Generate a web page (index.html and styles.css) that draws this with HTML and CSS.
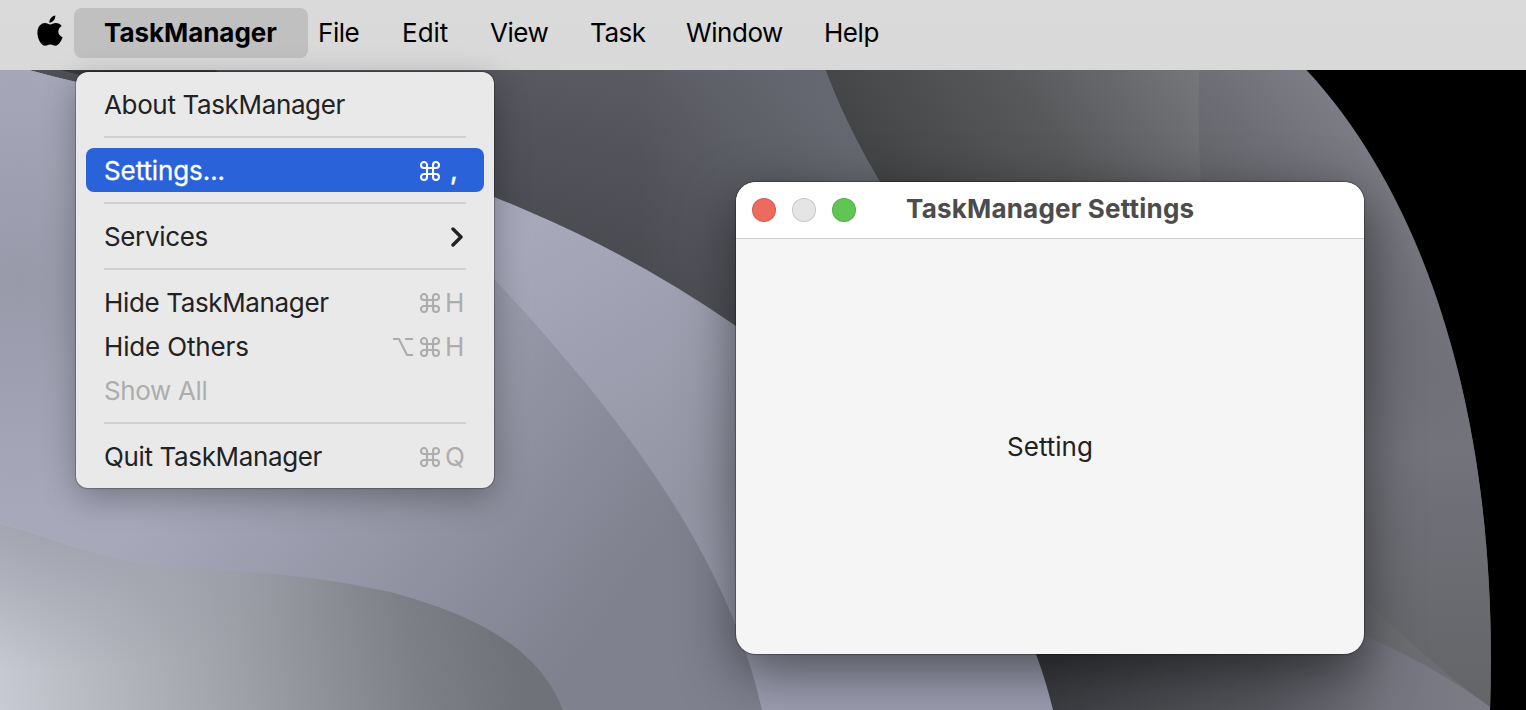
FILE: index.html
```
<!DOCTYPE html>
<html lang="en">
<head>
<meta charset="utf-8">
<title>TaskManager</title>
<link rel="stylesheet" href="styles.css">
</head>
<body>
<svg class="wallpaper" viewBox="0 0 1526 710" preserveAspectRatio="none" aria-hidden="true">
  <defs>
    <linearGradient id="mid" gradientUnits="userSpaceOnUse" x1="700" y1="70" x2="640" y2="330">
      <stop offset="0" stop-color="#5b5c64"/><stop offset="1" stop-color="#45464b"/>
    </linearGradient>
    <linearGradient id="midglow" gradientUnits="userSpaceOnUse" x1="640" y1="0" x2="880" y2="0">
      <stop offset="0" stop-color="#777a85" stop-opacity="0"/><stop offset="1" stop-color="#777a85" stop-opacity=".5"/>
    </linearGradient>
    <linearGradient id="fan" gradientUnits="userSpaceOnUse" x1="900" y1="210" x2="1170" y2="20">
      <stop offset="0" stop-color="#434446"/><stop offset=".5" stop-color="#57585a"/><stop offset="1" stop-color="#77787c"/>
    </linearGradient>
    <linearGradient id="edge" gradientUnits="userSpaceOnUse" x1="1180" y1="260" x2="1350" y2="110">
      <stop offset="0" stop-color="#58595c"/><stop offset="1" stop-color="#7c7d86"/>
    </linearGradient>
    <linearGradient id="side" gradientUnits="userSpaceOnUse" x1="0" y1="200" x2="0" y2="700">
      <stop offset="0" stop-color="#73747d" stop-opacity="0"/><stop offset=".5" stop-color="#72737b"/><stop offset="1" stop-color="#646568"/>
    </linearGradient>
    <linearGradient id="bottom" gradientUnits="userSpaceOnUse" x1="1040" y1="690" x2="1480" y2="690">
      <stop offset="0" stop-color="#3b3c40"/><stop offset=".5" stop-color="#55565c"/><stop offset=".8" stop-color="#74757e"/><stop offset="1" stop-color="#7b7c86"/>
    </linearGradient>
    <linearGradient id="lav" gradientUnits="userSpaceOnUse" x1="530" y1="230" x2="790" y2="640">
      <stop offset="0" stop-color="#a7a9bb"/><stop offset=".65" stop-color="#9395a4"/><stop offset="1" stop-color="#9c9eb0"/>
    </linearGradient>
    <linearGradient id="fold" gradientUnits="userSpaceOnUse" x1="220" y1="400" x2="580" y2="650">
      <stop offset="0" stop-color="#a7a9bb"/><stop offset=".45" stop-color="#9698a8"/><stop offset="1" stop-color="#7f818f"/>
    </linearGradient>
    <radialGradient id="foldShade" gradientUnits="userSpaceOnUse" cx="20" cy="280" r="230">
      <stop offset="0" stop-color="#989aaa"/><stop offset="1" stop-color="#989aaa" stop-opacity="0"/>
    </radialGradient>
    <linearGradient id="wave" gradientUnits="userSpaceOnUse" x1="0" y1="710" x2="510" y2="620">
      <stop offset="0" stop-color="#c8cad3"/><stop offset=".45" stop-color="#a0a2aa"/><stop offset=".8" stop-color="#7e8088"/><stop offset="1" stop-color="#707279"/>
    </linearGradient>
    <radialGradient id="waveTop" gradientUnits="userSpaceOnUse" cx="0" cy="0" r="1" gradientTransform="translate(50 520) scale(330 150)">
      <stop offset="0" stop-color="#9c9eab" stop-opacity=".9"/><stop offset="1" stop-color="#9c9eab" stop-opacity="0"/>
    </radialGradient>
    <clipPath id="globe"><path d="M0 60H1297C1425 190 1500 420 1490 710H0Z"/></clipPath>
  </defs>
  <rect width="1526" height="710" fill="#000"/>
  <path d="M0 60H1297C1425 190 1500 420 1490 710H0Z" fill="url(#edge)"/>
  <path d="M1200 190H1526V710H1200Z" fill="url(#side)" clip-path="url(#globe)"/>
  <path d="M800 60H1200Q1196 130 1204 230H800Z" fill="url(#fan)"/>
  <path d="M1030 585H1350Q1420 655 1490 707V710H1030Z" fill="#6c6d71"/>
  <path d="M1030 598H1350V630Q1430 662 1490 707V710H1030Z" fill="url(#bottom)"/>
  <path d="M0 60H822Q845 125 885 190L900 400H0Z" fill="url(#mid)"/>
  <path d="M0 60H822Q845 125 885 190L900 400H0Z" fill="url(#midglow)"/>
  <path d="M20 60H200L230 80H100Z" fill="#38393c"/>
  <path d="M0 70H29Q75 83 130 93C300 128 430 168 530 212Q636 257 736 326C900 430 1015 550 1053 710H0Z" fill="url(#lav)"/>
  <path d="M0 70H29Q75 83 130 93L400 180L494 279C635 430 730 565 762 710H0Z" fill="url(#fold)"/>
  <path d="M0 70H29Q75 83 130 93L400 180L494 279C635 430 730 565 762 710H0Z" fill="url(#foldShade)"/>
  <path d="M0 523C75 546 110 563 185 567C270 573 325 577 390 592C480 616 540 650 563 710H0Z" fill="url(#wave)"/>
  <path d="M0 523C75 546 110 563 185 567C270 573 325 577 390 592C480 616 540 650 563 710H0Z" fill="url(#waveTop)"/>
</svg>

<header class="menubar">
  <svg class="apple" viewBox="0 0 26 32" aria-hidden="true">
    <path d="M18.3 0.6C18.6 4.5 15.3 8 12.4 7.7C12.1 4.1 15.2 1 18.3 .6ZM13.2 9.5C14.7 9.5 16.4 8 18.8 8C21.2 8 23.4 9.1 24.7 11C19.7 14.2 20.5 20.2 25.6 22.3C24.3 26 21.6 30.7 18.5 30.7C16.5 30.7 15.7 29.4 13.2 29.4C10.7 29.4 9.9 30.7 8 30.7C4.5 30.7.4 24.2.4 17.7C.4 11.4 4.2 8.1 8 8.1C10.1 8.1 11.8 9.5 13.2 9.5Z"/>
  </svg>
  <nav class="menus">
    <span class="menu app">TaskManager</span>
    <span class="menu file">File</span>
    <span class="menu edit">Edit</span>
    <span class="menu view">View</span>
    <span class="menu task">Task</span>
    <span class="menu window-menu">Window</span>
    <span class="menu">Help</span>
  </nav>
</header>

<div class="dropdown">
  <div class="row"><span>About TaskManager</span></div>
  <div class="rule"></div>
  <div class="row selected"><span class="settings">Settings...</span><span class="keys"><svg class="cmd" viewBox="0 0 20 20"><use href="#cmd"/></svg><span class="key comma">,</span></span></div>
  <div class="rule"></div>
  <div class="row"><span>Services</span><svg class="chevron" viewBox="0 0 12 20"><path d="M2 2L10 10L2 18"/></svg></div>
  <div class="rule"></div>
  <div class="row"><span>Hide TaskManager</span><span class="keys"><svg class="cmd" viewBox="0 0 20 20"><use href="#cmd"/></svg><span class="key">H</span></span></div>
  <div class="row"><span class="others">Hide Others</span><span class="keys"><svg class="opt" viewBox="0 0 22 20"><path d="M1 2H7L15 18H21M13 2H21"/></svg><svg class="cmd" viewBox="0 0 20 20"><use href="#cmd"/></svg><span class="key">H</span></span></div>
  <div class="row disabled"><span>Show All</span></div>
  <div class="rule"></div>
  <div class="row"><span>Quit TaskManager</span><span class="keys"><svg class="cmd" viewBox="0 0 20 20"><use href="#cmd"/></svg><span class="key">Q</span></span></div>
</div>

<section class="window">
  <div class="titlebar">
    <i class="light red"></i><i class="light grey"></i><i class="light green"></i>
    <span class="title">TaskManager Settings</span>
  </div>
  <div class="content"><span>Setting</span></div>
</section>

<svg class="symbols" aria-hidden="true">
  <symbol id="cmd" viewBox="0 0 20 20">
    <path d="M7 7V4A3 3 0 1 0 4 7H16A3 3 0 1 0 13 4V16A3 3 0 1 0 16 13H4A3 3 0 1 0 7 16Z" fill="none" stroke="currentColor" stroke-width="2.1"/>
  </symbol>
</svg>
</body>
</html>
```
FILE: styles.css
```
* { box-sizing: border-box; }
body {
  margin: 0;
  width: 1526px;
  height: 710px;
  position: relative;
  overflow: hidden;
  background: #000;
  font: 400 26px/44px Inter, "Liberation Sans", sans-serif;
  color: #222;
}
.wallpaper { position: absolute; left: 0; top: 0; width: 1526px; height: 710px; }
.symbols { position: absolute; width: 0; height: 0; }
.menubar {
  position: relative;
  z-index: 3;
  height: 70px;
  display: flex;
  align-items: flex-start;
  padding: 8px 0 0 37px;
  background: linear-gradient(#dadada, #d9d9d9);
  color: #000;
}
.apple { width: 26px; height: 32px; margin: 7px 11px 0 0; }
.menus { display: flex; }
.menu { height: 50px; line-height: 50px; white-space: nowrap; letter-spacing: -.45px; }
.app { width: 234px; padding-left: 30px; margin-right: 10px; border-radius: 8px; background: #c0c0c0; font-weight: 700; letter-spacing: -.05px; }
.file { width: 84px; }
.edit { width: 88px; letter-spacing: 0; }
.view { width: 100px; }
.task { width: 96px; }
.window-menu { width: 138px; }
.dropdown {
  position: absolute;
  z-index: 4;
  left: 76px;
  top: 72px;
  width: 418px;
  height: 416px;
  padding: 10px;
  border-radius: 12px;
  background: #e9e9e9;
  box-shadow: 0 0 1px 1px rgba(0,0,0,.25), 0 10px 34px rgba(0,0,0,.3);
}
.row { display: flex; align-items: center; justify-content: space-between; height: 44px; padding: 2px 18px 0 18px; border-radius: 8px; white-space: nowrap; letter-spacing: -.36px; }
.others { letter-spacing: -.15px; }
.rule { height: 2px; margin: 10px 18px; background: #d0d0d0; }
.selected { background: #2962d9; color: #fff; letter-spacing: -.1px; -webkit-text-stroke: .3px #fff; }
.disabled { color: #adadad; }
.keys { display: flex; align-items: center; color: #adadad; letter-spacing: 0; }
.selected .keys { color: #fff; }
.cmd { width: 20px; height: 20px; margin-bottom: 1px; }
.opt { width: 22px; height: 20px; margin: 0 6px 1px 0; fill: none; stroke: currentColor; stroke-width: 2.1; }
.key { width: 26px; padding-left: 5px; height: 44px; }
.comma { padding-left: 10px; font-weight: 500; }
.chevron { width: 12px; height: 20px; margin-right: 3px; fill: none; stroke: #222; stroke-width: 3.4; stroke-linecap: round; stroke-linejoin: round; }
.window {
  position: absolute;
  z-index: 2;
  left: 736px;
  top: 182px;
  width: 628px;
  height: 472px;
  border-radius: 20px;
  background: #f5f5f5;
  overflow: hidden;
  box-shadow: 0 0 1px 1px rgba(0,0,0,.3), 0 18px 54px rgba(0,0,0,.5);
}
.titlebar { display: flex; align-items: center; gap: 16px; height: 57px; padding: 0 16px; background: #fff; border-bottom: 1px solid #d0d0d0; }
.light { width: 24px; height: 24px; border-radius: 50%; border: 1px solid rgba(0,0,0,.13); }
.red { background: #ed6a5e; }
.grey { background: #e5e5e5; }
.green { background: #61c554; }
.title { margin-left: 34px; padding-bottom: 2px; font-weight: 700; letter-spacing: .2px; color: #4c4c4c; white-space: nowrap; }
.content { height: 415px; display: flex; align-items: center; justify-content: center; }
```
